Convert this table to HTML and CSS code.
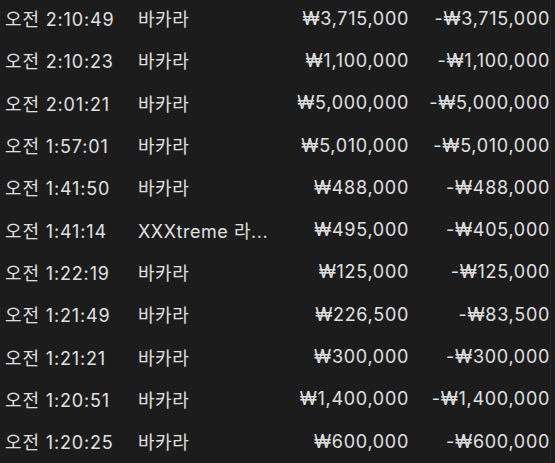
FILE: index.html
```html
<!DOCTYPE html>
<html lang="ko">
<head>
<meta charset="utf-8">
<link rel="stylesheet" href="styles.css">
</head>
<body>
<div class="list">
  <div class="row"><span class="time">오전 2:10:49</span><span class="game">바카라</span><span class="bet">₩3,715,000</span><span class="res">-₩3,715,000</span></div>
  <div class="row"><span class="time">오전 2:10:23</span><span class="game">바카라</span><span class="bet">₩1,100,000</span><span class="res">-₩1,100,000</span></div>
  <div class="row"><span class="time">오전 2:01:21</span><span class="game">바카라</span><span class="bet">₩5,000,000</span><span class="res">-₩5,000,000</span></div>
  <div class="row"><span class="time">오전 1:57:01</span><span class="game">바카라</span><span class="bet">₩5,010,000</span><span class="res">-₩5,010,000</span></div>
  <div class="row"><span class="time">오전 1:41:50</span><span class="game">바카라</span><span class="bet">₩488,000</span><span class="res">-₩488,000</span></div>
  <div class="row"><span class="time">오전 1:41:14</span><span class="game">XXXtreme 라...</span><span class="bet">₩495,000</span><span class="res">-₩405,000</span></div>
  <div class="row"><span class="time">오전 1:22:19</span><span class="game">바카라</span><span class="bet">₩125,000</span><span class="res">-₩125,000</span></div>
  <div class="row"><span class="time">오전 1:21:49</span><span class="game">바카라</span><span class="bet">₩226,500</span><span class="res">-₩83,500</span></div>
  <div class="row"><span class="time">오전 1:21:21</span><span class="game">바카라</span><span class="bet">₩300,000</span><span class="res">-₩300,000</span></div>
  <div class="row"><span class="time">오전 1:20:51</span><span class="game">바카라</span><span class="bet">₩1,400,000</span><span class="res">-₩1,400,000</span></div>
  <div class="row"><span class="time">오전 1:20:25</span><span class="game">바카라</span><span class="bet">₩600,000</span><span class="res">-₩600,000</span></div>
</div>
</body>
</html>
```
FILE: styles.css
```css
html, body {
  margin: 0;
  padding: 0;
  background: #1c1c1c;
  height: 100%;
  overflow: hidden;
}
body {
  font-family: Inter, "Noto Sans CJK KR", sans-serif;
  font-size: 18px;
  letter-spacing: 0.7px;
  color: #e0e0e0;
}
.list {
  margin-top: -3px;
  border-right: 1px solid #262626;
  width: 550px;
}
.row {
  display: grid;
  grid-template-columns: 133px 140px 131px 141px;
  height: 42.3px;
  align-items: center;
  padding-left: 5px;
  white-space: nowrap;
}
.time {
  letter-spacing: 0.85px;
}
.game {
  letter-spacing: 0.55px;
}
.bet, .res {
  text-align: right;
}
```
